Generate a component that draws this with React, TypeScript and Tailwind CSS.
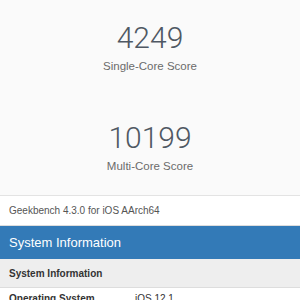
const font = "font-['Liberation_Sans',Arial,sans-serif]";

function Score({ value, label }: { value: string; label: string }) {
  return (
    <div className="flex flex-col items-center">
      <div className="font-['Roboto',sans-serif] text-[30px] font-light leading-[30px] text-[#4f5863]">{value}</div>
      <div className="mt-[8px] text-[11.5px] leading-[11.5px] text-[#6b6b6b]">{label}</div>
    </div>
  );
}

export default function App() {
  return (
    <div className={`w-[300px] h-[300px] overflow-hidden bg-white ${font}`}>
      <div className="flex h-[196px] flex-col items-center border-b border-[#e3e3e3] bg-[#fafafa] pt-[23px]">
        <Score value="4249" label="Single-Core Score" />
        <div className="mt-[50px]">
          <Score value="10199" label="Multi-Core Score" />
        </div>
      </div>
      <div className="flex h-[30px] items-center border-b border-[#dddddd] px-[9px] text-[10px] text-[#555555]">
        Geekbench 4.3.0 for iOS AArch64
      </div>
      <div className="flex h-[33px] items-center bg-[#337ab7] px-[9px] text-[13px] text-white">
        System Information
      </div>
      <div className="flex h-[29px] items-center border-b border-[#dddddd] bg-[#eeeeee] px-[9px] text-[10px] font-bold text-[#333333]">
        System Information
      </div>
      <div className="flex px-[9px] pt-[4px] text-[10px] leading-[14px] text-[#333333]">
        <div className="w-[126px] font-bold">Operating System</div>
        <div>iOS 12.1</div>
      </div>
    </div>
  );
}
